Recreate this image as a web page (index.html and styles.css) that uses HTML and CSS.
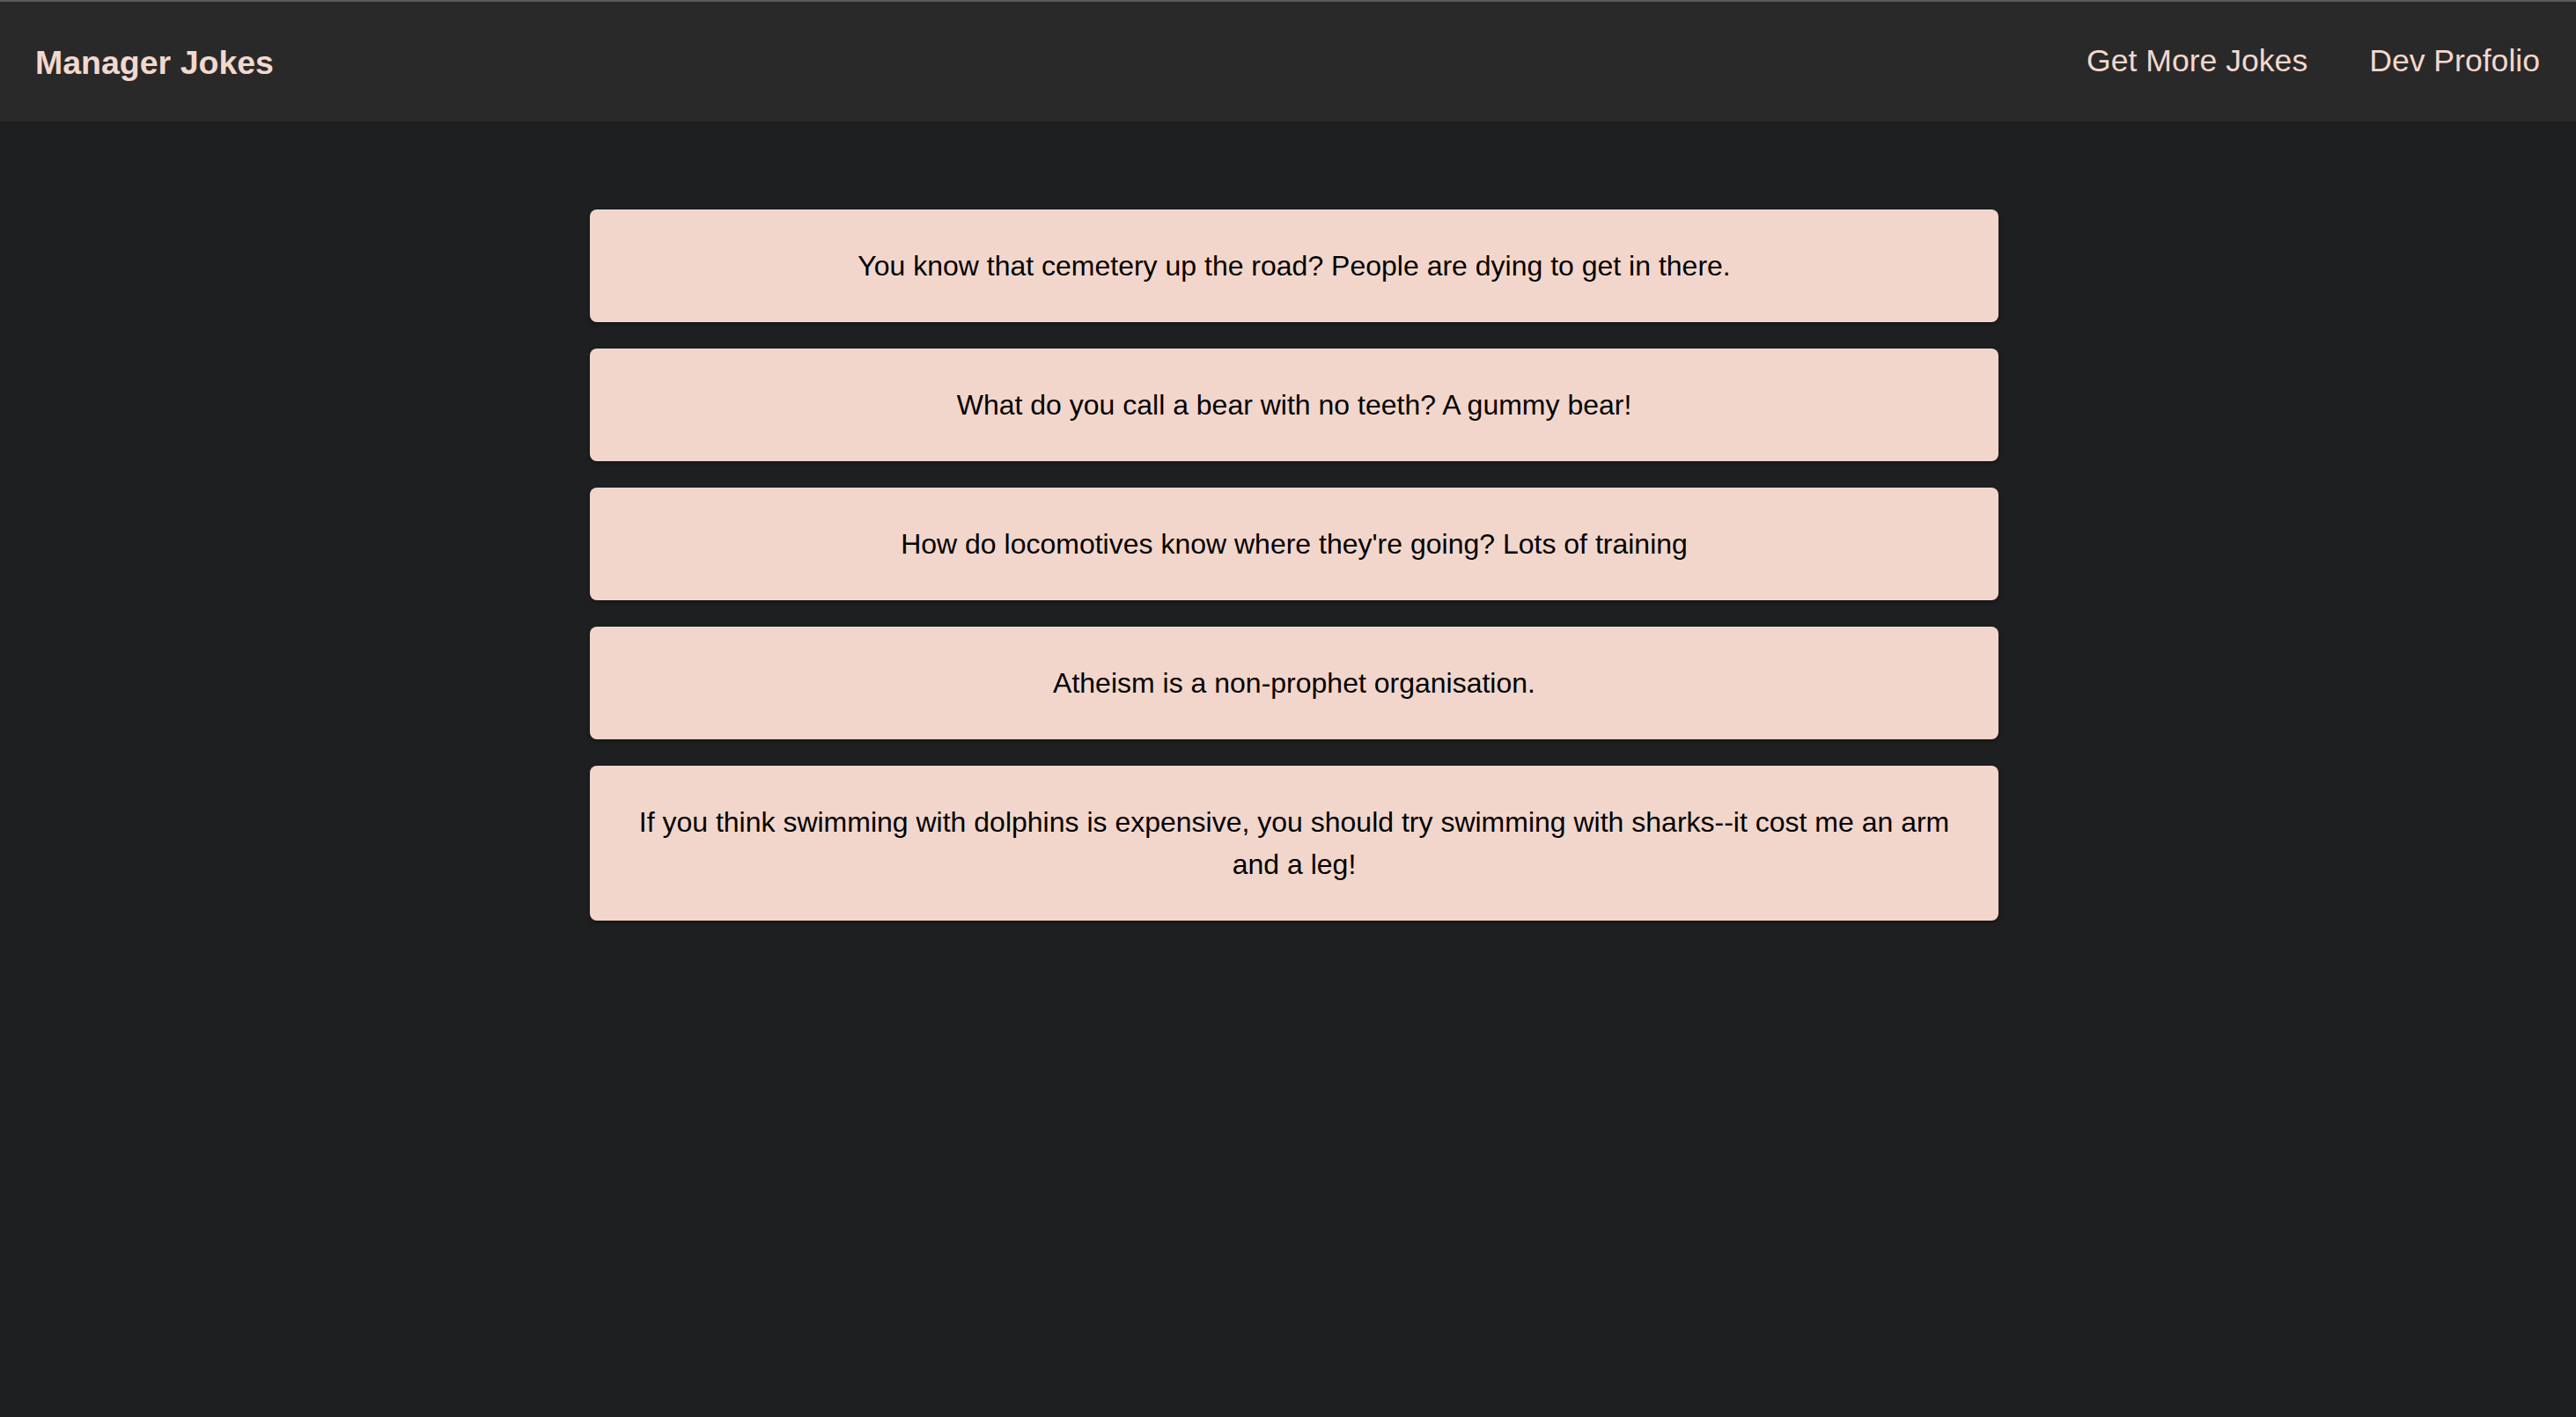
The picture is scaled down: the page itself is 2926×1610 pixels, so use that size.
FILE: index.html
```html
<!DOCTYPE html>
<html lang="en">
<head>
<meta charset="utf-8">
<title>Manager Jokes</title>
<link rel="stylesheet" href="styles.css">
</head>
<body>
<header class="topbar">
  <a class="brand" href="#">Manager Jokes</a>
  <nav class="nav">
    <a class="nav-link" href="#">Get More Jokes</a>
    <a class="nav-link" href="#">Dev Profolio</a>
  </nav>
</header>
<main class="jokes">
  <div class="joke">You know that cemetery up the road? People are dying to get in there.</div>
  <div class="joke">What do you call a bear with no teeth? A gummy bear!</div>
  <div class="joke">How do locomotives know where they're going? Lots of training</div>
  <div class="joke">Atheism is a non-prophet organisation.</div>
  <div class="joke">If you think swimming with dolphins is expensive, you should try swimming with sharks--it cost me an arm and a leg!</div>
</main>
</body>
</html>
```
FILE: styles.css
```css
* { box-sizing: border-box; }
html, body {
  margin: 0;
  padding: 0;
}
body {
  background: #1e1f21;
  font-family: "Liberation Sans", Arial, sans-serif;
  min-height: 1610px;
}
.topbar {
  height: 138px;
  background: #292929;
  border-top: 2px solid #5a5a5a;
  display: flex;
  align-items: center;
  justify-content: space-between;
  padding: 0 41px 0 40px;
}
.brand {
  color: #f2d8ce;
  font-weight: bold;
  font-size: 37.5px;
  text-decoration: none;
  margin-top: 2px;
}
.nav {
  display: flex;
  gap: 70px;
  margin-bottom: 2px;
}
.nav-link {
  color: #f2d8ce;
  font-size: 35.6px;
  text-decoration: none;
}
.jokes {
  display: flex;
  flex-direction: column;
  align-items: center;
  gap: 30px;
  padding: 100px 0 0 14px;
}
.joke {
  width: 1600px;
  background: #f2d6cb;
  color: #000;
  border-radius: 8px;
  padding: 40px 40px;
  font-size: 32px;
  line-height: 48px;
  text-align: center;
  box-shadow: 0 2px 4px rgba(0, 0, 0, 0.35);
}
```
